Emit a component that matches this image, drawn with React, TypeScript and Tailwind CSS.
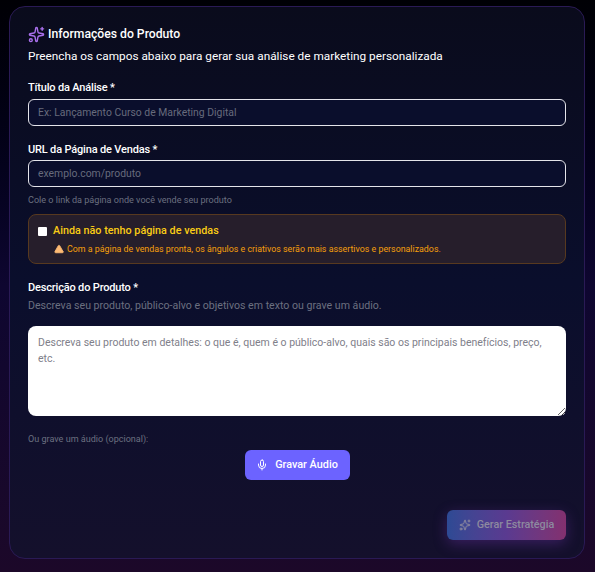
import { Mic, Sparkles, TriangleAlert } from "lucide-react";

const font = { fontFamily: 'Roboto, sans-serif' };

export default function App() {
  return (
    <div
      style={font}
      className="h-[572px] w-[595px] overflow-hidden bg-gradient-to-b from-[#000005] via-[#0e0630] to-[#1c0829] pb-[13px] pl-[9px] pr-[10px] pt-[6px]"
    >
      <div className="flex h-[553px] flex-col rounded-2xl border border-[#2a1a55] bg-gradient-to-b from-[#0a0b1c] via-[#0a0e2c] to-[#14102c] px-[18px] pt-[17px]">
        <div className="flex h-[20px] items-center gap-[3px]">
          <Sparkles size={17} strokeWidth={2} className="text-[#a970ec]" />
          <h2 className="text-[12.2px] font-medium leading-5 text-white">Informações do Produto</h2>
        </div>
        <p className="mt-[2px] text-[11.8px] font-normal leading-5 text-white">
          Preencha os campos abaixo para gerar sua análise de marketing personalizada
        </p>

        <label className="mt-[12px] h-[20px] text-[11px] font-medium leading-5 tracking-[-0.17px] text-white">Título da Análise *</label>
        <input
          readOnly
          placeholder="Ex: Lançamento Curso de Marketing Digital"
          className="mt-[1px] h-[27px] w-full rounded-md border border-[#e4e4ea] bg-[#0a0e2c] px-[9px] text-[10.4px] text-white outline-none placeholder:text-[#676b7c]"
        />

        <label className="mt-[14px] h-[20px] text-[11px] font-medium leading-5 tracking-[-0.17px] text-white">URL da Página de Vendas *</label>
        <input
          readOnly
          placeholder="exemplo.com/produto"
          className="h-[27px] w-full rounded-md border border-[#e4e4ea] bg-[#0a0e2c] px-[9px] text-[10.4px] text-white outline-none placeholder:text-[#676b7c]"
        />
        <p className="mt-[6px] text-[9.07px] leading-[14px] text-[#6b7080]">Cole o link da página onde você vende seu produto</p>

        <div className="mt-[7px] h-[50px] rounded-lg border border-[#57391f] bg-[#261e2b] pl-[9px] pt-[7px]">
          <div className="flex h-[18px] items-center gap-[6px]">
            <input type="checkbox" readOnly className="h-[9px] w-[9px] appearance-none rounded-[1px] bg-white" />
            <span className="text-[10.8px] font-medium leading-[18px] text-[#facc15]">Ainda não tenho página de vendas</span>
          </div>
          <div className="mt-[2px] flex items-center gap-[3px] pl-[16px]">
            <TriangleAlert size={10} fill="#fdba74" stroke="#fdba74" />
            <span className="text-[8.85px] leading-[14px] text-[#f59e0b]">
              Com a página de vendas pronta, os ângulos e criativos serão mais assertivos e personalizados.
            </span>
          </div>
        </div>

        <label className="mt-[14px] h-[20px] text-[11px] font-medium leading-5 tracking-[-0.17px] text-white">Descrição do Produto *</label>
        <p className="text-[10.6px] leading-[16px] text-[#6b7080]">
          Descreva seu produto, público-alvo e objetivos em texto ou grave um áudio.
        </p>
        <textarea
          readOnly
          placeholder="Descreva seu produto em detalhes: o que é, quem é o público-alvo, quais são os principais benefícios, preço, etc."
          className="mt-[12px] h-[90px] w-full rounded-lg bg-white px-[10px] py-[9px] text-[10.5px] leading-[16px] text-black outline-none placeholder:text-[#80808a]"
        />

        <p className="mt-[16px] text-[9.05px] leading-[14px] text-[#6b7080]">Ou grave um áudio (opcional):</p>
        <div className="mt-[4px] flex justify-center">
          <button className="flex h-[30px] w-[105px] items-center justify-center gap-[7px] rounded-md bg-[#6c63ff] text-[10.85px] font-medium text-white">
            <Mic size={12} />
            Gravar Áudio
          </button>
        </div>
        <div className="mt-[30px] flex justify-end">
          <button className="flex h-[30px] w-[119px] items-center justify-center gap-[6px] rounded-md bg-gradient-to-r from-[#2d4a94] via-[#5a3a90] to-[#83306f] text-[10.75px] font-medium text-[#8d8a9f] shadow-[0_4px_14px_rgba(126,58,190,0.35)]">
            <Sparkles size={12} />
            Gerar Estratégia
          </button>
        </div>
      </div>
    </div>
  );
}
